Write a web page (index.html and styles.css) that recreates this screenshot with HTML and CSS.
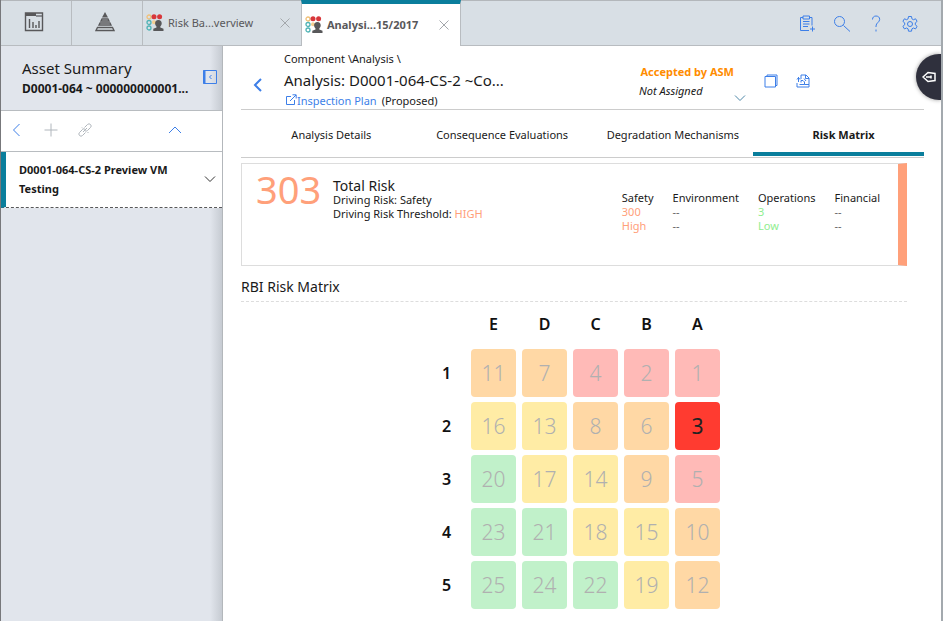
FILE: index.html
```
<!DOCTYPE html>
<html lang="en">
<head>
    <meta charset="UTF-8">
    <meta name="viewport" content="width=device-width, initial-scale=1.0">
    <title>Risk Analysis</title>
    <link rel="stylesheet" href="styles.css">
</head>
<body>
    <!-- shared icon for the analysis tabs -->
    <svg class="sprite" aria-hidden="true">
        <symbol id="icon-risk" viewBox="0 0 18 18">
            <circle cx="3" cy="3" r="2" fill="none" stroke="#f0c078" stroke-width="1.3"/>
            <circle cx="8" cy="2.7" r="2.5" fill="#d8373b"/>
            <circle cx="13.6" cy="2.7" r="2.5" fill="#d8373b"/>
            <circle cx="3" cy="8.5" r="2" fill="none" stroke="#4fb3b5" stroke-width="1.3"/>
            <circle cx="8" cy="8.2" r="2" fill="#f5cf93"/>
            <circle cx="3" cy="14" r="2" fill="none" stroke="#4fb3b5" stroke-width="1.3"/>
            <path d="M12.4 6c2.2 0 3.3 1.400 3.300 3.300 0 1.300-.5 2.500-1.400 3.200v1l3.200 1.300V17H7.300v-2.200l3.200-1.300v-1C9.600 11.800 9.100 10.600 9.100 9.300 9.100 7.400 10.200 6 12.400 6z" fill="#58585a"/>
        </symbol>
    </svg>

    <header class="topbar">
        <button class="nav-button" aria-label="Dashboard">
            <svg width="20" height="20" viewBox="0 0 20 20">
                <path d="M1.500 1h17v17.500h-17z" stroke-width="1.400"/>
                <path d="M1 2.500h11" stroke-width="3"/>
                <path d="M12 4h6" stroke-width="1.200"/>
                <path d="M5.500 7v9M9 10v6M12 13v3M15 9v7" stroke-width="1.400"/>
            </svg>
        </button>
        <button class="nav-button" aria-label="Hierarchy">
            <svg width="20" height="20" viewBox="0 0 20 20">
                <path d="M10 0l3 5.500H7z" fill="#58585a" stroke="none"/>
                <path d="M7 7h6l1 2H6zM5 11h10l1 2H4zM2.500 15.500h15L19 18.500H1z" stroke-width="1.300"/>
            </svg>
        </button>
        <div class="tab">
            <svg class="tab-icon" width="18" height="18"><use href="#icon-risk"/></svg>
            <a class="tab-label" href="#">Risk Ba...verview</a>
            <button class="tab-close" aria-label="Close tab">
                <svg width="10" height="10" viewBox="0 0 10 10"><path d="M.5.5l9 9M9.500.5l-9 9"/></svg>
            </button>
        </div>
        <div class="tab tab-active">
            <svg class="tab-icon" width="18" height="18"><use href="#icon-risk"/></svg>
            <a class="tab-label" href="#">Analysi...15/2017</a>
            <button class="tab-close" aria-label="Close tab">
                <svg width="10" height="10" viewBox="0 0 10 10"><path d="M.5.5l9 9M9.500.5l-9 9"/></svg>
            </button>
        </div>
        <nav class="tools">
            <button aria-label="New record">
                <svg width="18" height="18" viewBox="0 0 18 18">
                    <path d="M4 2.500H1.500v13H10M10.500 2.500H13v8M4 1h6.500v3H4zM4 6.500h6.500M4 9h6.500M4 11.500h5M13.500 11.500v5M11 14h5"/>
                </svg>
            </button>
            <button aria-label="Search">
                <svg width="18" height="18" viewBox="0 0 18 18"><circle cx="6.500" cy="6.500" r="5"/><path d="M10.500 10.500l6.500 6"/></svg>
            </button>
            <button aria-label="Help">
                <svg width="18" height="18" viewBox="0 0 18 18"><path d="M5.500 4.500C5.500 2.200 7 1 9 1s3.700 1.200 3.700 3.300c0 3-3.700 3.400-3.700 6.700v1M9 14.500v2"/></svg>
            </button>
            <button aria-label="Settings">
                <svg width="18" height="18" viewBox="0 0 18 18">
                    <circle cx="9" cy="9" r="2.500"/>
                    <path d="M7.500 1.500h3l.4 2.300 1.500.9 2.200-.9 1.500 2.600-1.800 1.500v1.900l1.800 1.500-1.500 2.600-2.200-.9-1.500.9-.4 2.300h-3l-.4-2.300-1.500-.9-2.200.9-1.500-2.600 1.800-1.500V7.900L1.900 6.400l1.500-2.600 2.200.9 1.500-.9z"/>
                </svg>
            </button>
        </nav>
    </header>

    <div class="layout">
        <aside class="sidebar">
            <div class="asset">
                <div class="asset-text">
                    <h2>Asset Summary</h2>
                    <p>D0001-064 ~ 000000000001...</p>
                </div>
                <button class="collapse" aria-label="Collapse panel">
                    <svg width="14" height="14" viewBox="0 0 14 14">
                        <path d="M.5.5h13v13H.5z"/><path d="M1.500 0v14" stroke-width="2"/><path d="M8.500 5L6.500 7l2 2"/>
                    </svg>
                </button>
            </div>
            <div class="side-tools">
                <button aria-label="Back"><svg width="14" height="14" viewBox="0 0 14 14"><path d="M9.500 1l-6 6 6 6"/></svg></button>
                <button class="muted" aria-label="Add"><svg width="14" height="14" viewBox="0 0 14 14"><path d="M7 .5v13M.5 7h13"/></svg></button>
                <button class="muted" aria-label="Link">
                    <svg width="14" height="14" viewBox="0 0 14 14">
                        <path d="M6.500 4.500l3-3a2.100 2.100 0 0 1 3 3l-3 3a2.100 2.100 0 0 1-2.500.3M7.500 9.500l-3 3a2.100 2.100 0 0 1-3-3l3-3A2.100 2.100 0 0 1 7 6.200M5 9l4-4M4 4.500l1 1M9.500 9l1 1"/>
                    </svg>
                </button>
                <button class="side-up" aria-label="Move up"><svg width="14" height="14" viewBox="0 0 14 14"><path d="M1 10l6-6 6 6"/></svg></button>
            </div>
            <div class="side-item">
                <a href="#">D0001-064-CS-2 Preview VM Testing</a>
                <button aria-label="Expand item"><svg width="12" height="12" viewBox="0 0 12 12"><path d="M1 3.500l5 5 5-5"/></svg></button>
            </div>
        </aside>

        <main class="main">
            <section class="record">
                <button class="record-back" aria-label="Go back">
                    <svg width="10" height="14" viewBox="0 0 10 14"><path d="M8 1L2 7l6 6"/></svg>
                </button>
                <div class="record-text">
                    <p>Component \Analysis \</p>
                    <h1>Analysis: D0001-064-CS-2 ~Co...</h1>
                    <p class="record-plan">
                        <a href="#"><svg width="12" height="12" viewBox="0 0 12 12"><path d="M6 2.500H1.500v8h8V6M5 7l6-6M7.500.8h3.700v3.700"/></svg>Inspection Plan</a>
                        <span>(Proposed)</span>
                    </p>
                </div>
                <div class="state">
                    <div class="state-text">
                        <strong>Accepted by ASM</strong>
                        <em>Not Assigned</em>
                    </div>
                    <button aria-label="Change state"><svg width="12" height="12" viewBox="0 0 12 12"><path d="M1 3.500l5 5 5-5"/></svg></button>
                </div>
                <div class="record-tools">
                    <button aria-label="Copy"><svg width="14" height="14" viewBox="0 0 14 14"><path d="M1 2.500h10.500V13H1zM3 2.500V1h10v10.500h-1.500"/></svg></button>
                    <button aria-label="Documents">
                        <svg width="14" height="14" viewBox="0 0 14 14"><path d="M5 5V1h5l3 3v6.500H8.500M9.500 1v3.500H13M2.500 3v5M1 5.500l1.500-2 1.500 2M1 9v4h12v-2.500M3.500 10.500h5V8L7 6.500H5v2M8 4.500l2 2.500"/></svg>
                    </button>
                </div>
            </section>

            <nav class="sections">
                <a href="#">Analysis Details</a>
                <a href="#">Consequence Evaluations</a>
                <a href="#">Degradation Mechanisms</a>
                <a href="#" class="current">Risk Matrix</a>
            </nav>

            <div class="content">
                <section class="risk-card">
                    <div class="risk-score">303</div>
                    <div class="risk-total">
                        <h2>Total Risk</h2>
                        <p>Driving Risk: Safety</p>
                        <p>Driving Risk Threshold: <span class="high">HIGH</span></p>
                    </div>
                    <dl class="risk-parts">
                        <div><dt>Safety</dt><dd class="high">300</dd><dd class="high">High</dd></div>
                        <div><dt>Environment</dt><dd>--</dd><dd>--</dd></div>
                        <div><dt>Operations</dt><dd class="low">3</dd><dd class="low">Low</dd></div>
                        <div><dt>Financial</dt><dd>--</dd><dd>--</dd></div>
                    </dl>
                </section>

                <h2 class="matrix-title">RBI Risk Matrix</h2>
                <table class="matrix">
                    <thead>
                        <tr><td></td><th scope="col">E</th><th scope="col">D</th><th scope="col">C</th><th scope="col">B</th><th scope="col">A</th></tr>
                    </thead>
                    <tbody>
                        <tr><th scope="row">1</th><td class="orange">11</td><td class="orange">7</td><td class="red">4</td><td class="red">2</td><td class="red">1</td></tr>
                        <tr><th scope="row">2</th><td class="yellow">16</td><td class="yellow">13</td><td class="orange">8</td><td class="orange">6</td><td class="selected">3</td></tr>
                        <tr><th scope="row">3</th><td class="green">20</td><td class="yellow">17</td><td class="yellow">14</td><td class="orange">9</td><td class="red">5</td></tr>
                        <tr><th scope="row">4</th><td class="green">23</td><td class="green">21</td><td class="yellow">18</td><td class="yellow">15</td><td class="orange">10</td></tr>
                        <tr><th scope="row">5</th><td class="green">25</td><td class="green">24</td><td class="green">22</td><td class="yellow">19</td><td class="orange">12</td></tr>
                    </tbody>
                </table>
            </div>

            <button class="drawer" aria-label="Open drawer">
                <svg width="14" height="12" viewBox="0 0 14 12"><path d="M1 6l5-4.500 7 1v7l-7 1zM4 6h5M9 4.500v3" /></svg>
            </button>
        </main>
    </div>
</body>
</html>
```
FILE: styles.css
```
* {
    box-sizing: border-box;
}
body {
    font-family: 'Noto Sans', 'Open Sans', sans-serif;
    font-size: 11px;
    line-height: 14px;
    color: #1a1a1a;
    margin: 0;
    min-height: 100vh;
    display: flex;
    flex-direction: column;
    border-left: 1px solid #77787b;
    border-right: 2px solid #a3a9ae;
    background-color: white;
}
h1, h2, p, dl, dd {
    margin: 0;
    font-weight: 400;
}
a {
    color: inherit;
    text-decoration: none;
}
button {
    display: flex;
    align-items: center;
    justify-content: center;
    padding: 0;
    border: 0;
    background: none;
    cursor: pointer;
}
button svg {
    fill: none;
    stroke: #3d7fe8;
}
.sprite {
    position: absolute;
    width: 0;
    height: 0;
}

/* top bar */
.topbar {
    display: flex;
    height: 46px;
    background-color: #d8dfe5;
    border-top: 1px solid #b3b7bb;
    box-shadow: inset 0 -1px #b8bcc0;
}
.nav-button {
    width: 71px;
    padding: 0 4px 3px 0;
    border-right: 1px solid #b8bcc0;
}
.nav-button svg {
    stroke: #58585a;
}
.tab {
    display: flex;
    align-items: center;
    width: 158px;
    padding: 0 11px 2px 3px;
    color: #58585a;
}
.tab-label {
    flex: 1;
    margin-left: 4px;
}
.tab-close svg {
    stroke: #a3a7ab;
}
.tab-active {
    width: 160px;
    margin-top: -1px;
    padding-bottom: 0;
    border-top: 4px solid #0a7e9c;
    border-left: 1px solid #b8bcc0;
    border-right: 1px solid #b8bcc0;
    background-color: white;
    font-weight: 700;
}
.tools {
    display: flex;
    align-items: center;
    gap: 16px;
    margin-left: auto;
    padding-right: 22px;
}

/* sidebar */
.layout {
    flex: 1;
    display: flex;
}
.sidebar {
    width: 222px;
    border-right: 1px solid #b3b7bb;
    background: linear-gradient(to left, #c6cbd2, #e1e5ec 12px);
}
.asset {
    display: flex;
    align-items: center;
    justify-content: space-between;
    height: 64px;
    padding: 0 5px 2px 21px;
}
.asset-text h2 {
    font-size: 15px;
    line-height: 24px;
}
.asset-text p {
    font-size: 12px;
    font-weight: 700;
    line-height: 18px;
}
.side-tools {
    display: flex;
    align-items: center;
    gap: 20px;
    height: 42px;
    padding: 0 40px 2px 9px;
    border-top: 1px solid #b8bcc0;
    border-bottom: 1px solid #b8bcc0;
    background-color: white;
}
.side-up {
    margin-left: auto;
}
.muted svg {
    stroke: #b0b6bc;
}
.side-item {
    display: flex;
    align-items: center;
    justify-content: space-between;
    height: 56px;
    padding: 0 6px 2px 13px;
    border-left: 5px solid #0a7e9c;
    border-bottom: 1px dashed #58585a;
    background-color: white;
    font-weight: 700;
    line-height: 19px;
}
.side-item a {
    max-width: 170px;
}
.side-item svg {
    stroke: #333;
}

/* record header */
.main {
    flex: 1;
    position: relative;
    min-width: 0;
    padding: 0 17px 0 18px;
}
.record {
    display: flex;
    align-items: center;
    height: 64px;
    border-bottom: 1px solid #ccc;
}
.record-back {
    width: 34px;
    padding-top: 14px;
}
.record-back svg {
    stroke-width: 2;
}
.record-text {
    flex: 1;
    align-self: flex-start;
    padding: 5px 0 0 9px;
    line-height: 16px;
}
.record-text h1 {
    font-size: 15px;
    line-height: 26px;
}
.record-plan {
    display: flex;
    gap: 5px;
}
.record-plan a {
    color: #3d7fe8;
}
.record-plan svg {
    margin: 0 0 -1px 1px;
    fill: none;
    stroke: #3d7fe8;
}
.state {
    display: flex;
    align-items: flex-end;
    padding-top: 11px;
    margin-right: 18px;
}
.state-text {
    display: flex;
    flex-direction: column;
    width: 95px;
    padding-bottom: 4px;
    line-height: 19px;
}
.state-text strong {
    color: #ff8c00;
    text-align: right;
}
.state svg {
    stroke: #4d87a8;
}
.record-tools {
    display: flex;
    gap: 18px;
    padding-top: 6px;
    margin-right: 114px;
}

/* section tabs */
.sections {
    display: grid;
    grid-template-columns: repeat(4, 1fr);
    border-bottom: 1px solid #ccc;
}
.sections a {
    height: 47px;
    padding: 18px 0 0 10px;
    text-align: center;
}
.sections .current {
    height: 46px;
    border-bottom: 4px solid #0a7e9c;
    font-weight: 700;
}

/* risk summary */
.content {
    padding: 5px 17px 0 0;
}
.risk-card {
    display: flex;
    height: 103px;
    padding: 4px 18px 0 14px;
    border: 1px solid #ddd;
    border-right: 9px solid #ffa07a;
}
.risk-score {
    width: 77px;
    color: #ffa07a;
    font-size: 38px;
    line-height: 42px;
}
.risk-total {
    padding-top: 11px;
}
.risk-total h2 {
    font-size: 14px;
    line-height: 14px;
}
.risk-parts {
    display: flex;
    gap: 19px;
    margin-left: auto;
    padding-top: 23px;
    color: #666;
}
.risk-parts dt {
    color: #1a1a1a;
}
.high {
    color: #ffa07a;
}
.low {
    color: #90ee90;
}

/* matrix */
.matrix-title {
    padding: 9px 0 2px;
    border-bottom: 1px dashed #ddd;
    font-size: 14px;
    line-height: 24px;
}
.matrix {
    margin: 0 auto;
    border-spacing: 6px 5px;
}
.matrix th, .matrix td {
    width: 45px;
    height: 48px;
    padding: 0;
    border-radius: 4px;
    text-align: center;
    font-size: 21px;
    font-weight: 300;
    color: #b0b0b0;
}
.matrix th {
    font-size: 16px;
    font-weight: 600;
    color: #111;
}
.matrix thead th, .matrix thead td {
    height: 37px;
    padding-bottom: 4px;
}
.matrix tr :first-child {
    width: 37px;
}
.matrix .red {
    background-color: #ffbab7;
}
.matrix .orange {
    background-color: #ffd8a5;
}
.matrix .yellow {
    background-color: #ffeca5;
}
.matrix .green {
    background-color: #c1f1ca;
}
.matrix .selected {
    background-color: #ff3b30;
    color: #222;
    font-weight: 400;
}

/* drawer handle on the right edge */
.drawer {
    position: absolute;
    top: 8px;
    right: 0;
    width: 25px;
    height: 46px;
    border-radius: 23px 0 0 23px;
    background-color: #2f303d;
    box-shadow: 0 0 4px rgba(0, 0, 0, 0.4);
}
.drawer svg {
    stroke: white;
    stroke-width: 1.5;
}
```
